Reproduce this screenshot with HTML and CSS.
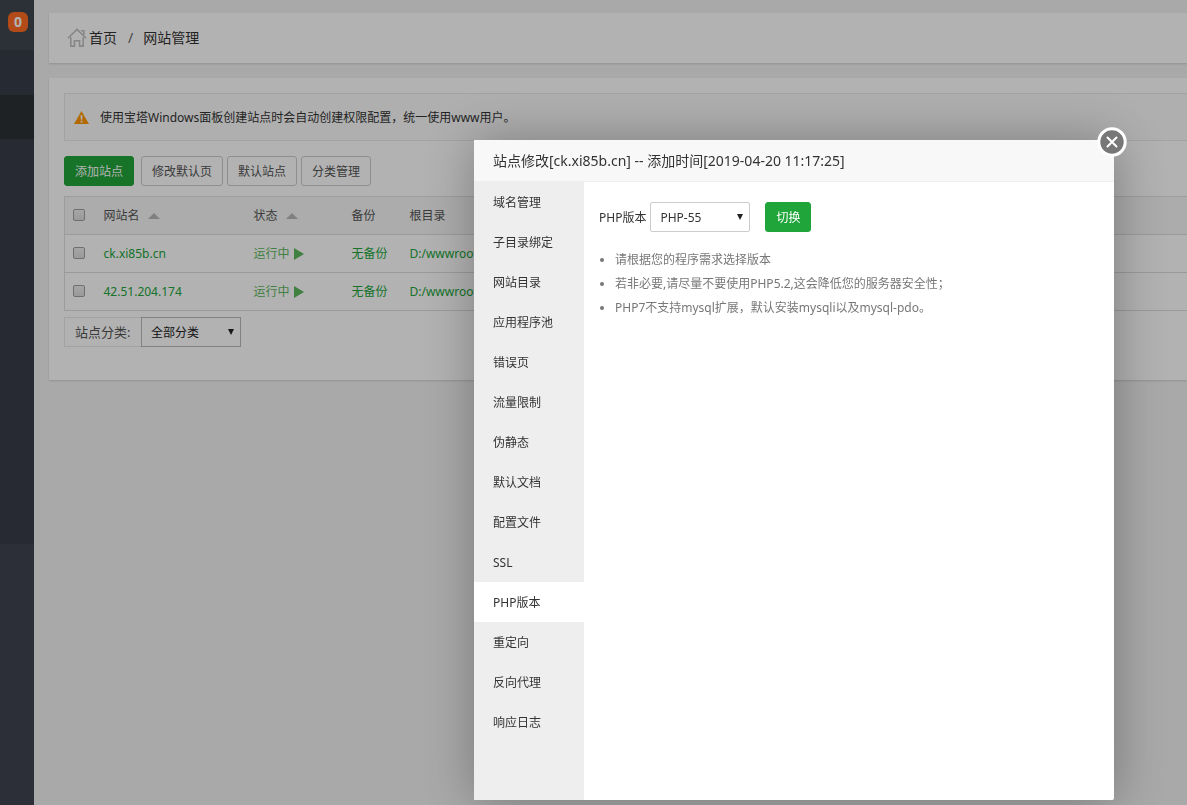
FILE: index.html
```html
<!DOCTYPE html>
<html lang="zh-CN">
<head>
<meta charset="utf-8">
<title>网站管理</title>
<link rel="stylesheet" href="styles.css">
</head>
<body>
<div class="layout">
  <aside class="sidebar">
    <div class="sidebar-top"><span class="badge">0</span></div>
    <div class="sidebar-item"></div>
    <div class="sidebar-item active"></div>
    <div class="sidebar-menu"></div>
    <div class="sidebar-rest"></div>
  </aside>
  <main class="main">
    <nav class="card crumbs">
      <svg class="home" viewBox="0 0 18 18" aria-hidden="true"><path d="M.8 9.200 9 1.200l8.200 8M12.600 2.400h2.600v4M3.400 8.400v7.900h3.300v-4.800h4.600v4.800h3.300V8.400" /></svg>
      <a href="#">首页</a><span class="slash">/</span><a href="#">网站管理</a>
    </nav>
    <section class="card content">
      <div class="notice">
        <svg class="warn" viewBox="0 0 14 12" aria-hidden="true"><path fill="#f90" d="M7 0 14 12H0z"/><path fill="#fff" d="M6 4h2l-.4 4H6.400zM6.200 9h1.600v1.600H6.200z"/></svg>
        <span>使用宝塔Windows面板创建站点时会自动创建权限配置，统一使用www用户。</span>
      </div>
      <div class="toolbar">
        <button class="btn primary add">添加站点</button>
        <button class="btn">修改默认页</button>
        <button class="btn">默认站点</button>
        <button class="btn">分类管理</button>
      </div>
      <table class="sites">
        <thead>
          <tr><th class="c-check"><input type="checkbox" aria-label="全选"></th><th class="c-name">网站名<i class="sort"></i></th><th class="c-state">状态<i class="sort"></i></th><th class="c-backup">备份</th><th>根目录</th></tr>
        </thead>
        <tbody>
          <tr><td><input type="checkbox" aria-label="ck.xi85b.cn"></td><td><a href="#">ck.xi85b.cn</a></td><td><a class="running" href="#">运行中<i class="play"></i></a></td><td><a href="#">无备份</a></td><td><a href="#">D:/wwwroot</a></td></tr>
          <tr><td><input type="checkbox" aria-label="42.51.204.174"></td><td><a href="#">42.51.204.174</a></td><td><a class="running" href="#">运行中<i class="play"></i></a></td><td><a href="#">无备份</a></td><td><a href="#">D:/wwwroot</a></td></tr>
        </tbody>
      </table>
      <div class="filter">
        <label for="category">站点分类:</label>
        <span class="select-wrap"><select id="category"><option>全部分类</option></select></span>
      </div>
    </section>
  </main>
</div>
<div class="shade"></div>
<div class="dialog" role="dialog" aria-labelledby="dialog-title">
  <h1 class="dialog-title" id="dialog-title">站点修改[ck.xi85b.cn] -- 添加时间[2019-04-20 11:17:25]</h1>
  <button class="close" aria-label="关闭"><svg viewBox="0 0 30 30" aria-hidden="true"><circle cx="15" cy="15" r="13.200" fill="#777" stroke="#fff" stroke-width="3"/><path d="m10.500 10.500 9 9m0-9-9 9" stroke="#fff" stroke-width="2" stroke-linecap="round"/></svg></button>
  <div class="dialog-body">
    <nav class="tabs">
      <a href="#">域名管理</a>
      <a href="#">子目录绑定</a>
      <a href="#">网站目录</a>
      <a href="#">应用程序池</a>
      <a href="#">错误页</a>
      <a href="#">流量限制</a>
      <a href="#">伪静态</a>
      <a href="#">默认文档</a>
      <a href="#">配置文件</a>
      <a href="#">SSL</a>
      <a href="#" class="on">PHP版本</a>
      <a href="#">重定向</a>
      <a href="#">反向代理</a>
      <a href="#">响应日志</a>
    </nav>
    <div class="pane">
      <div class="version">
        <label for="php">PHP版本</label>
        <span class="select-wrap"><select id="php" class="rounded"><option>PHP-55</option></select></span>
        <button class="btn primary switch">切换</button>
      </div>
      <ul class="tips">
        <li>请根据您的程序需求选择版本</li>
        <li>若非必要,请尽量不要使用PHP5.2,这会降低您的服务器安全性；</li>
        <li>PHP7不支持mysql扩展，默认安装mysqli以及mysql-pdo。</li>
      </ul>
    </div>
  </div>
</div>
</body>
</html>
```
FILE: styles.css
```css
* { box-sizing: border-box; }
html, body { height: 100%; }
body {
  margin: 0;
  overflow: hidden;
  background: #f3f3f3;
  color: #333;
  font: 12px/18px "Noto Sans", "Noto Sans CJK SC", sans-serif;
}
a { color: inherit; text-decoration: none; }
button, select { font: inherit; }

.layout { display: flex; min-height: 100%; }
.sidebar {
  flex: 0 0 34px;
  display: flex;
  flex-direction: column;
  background: #3f444f;
}
.sidebar-top { height: 50px; padding: 12px 6px 0 8px; background: #40464f; }
.badge {
  display: block;
  height: 20px;
  border-radius: 6px;
  background: #ff6c23;
  color: #fff;
  font-size: 14px;
  font-weight: 700;
  line-height: 20px;
  text-align: center;
}
.sidebar-item { height: 45px; background: #373d49; }
.sidebar-item.active { height: 44px; background: #2c3136; }
.sidebar-menu { height: 405px; background: #383d48; }
.sidebar-rest { flex: 1; }

.main { flex: 1; min-width: 0; padding: 13px 0 0 15px; }
.card { background: #fff; box-shadow: 0 1px 2px rgba(0, 0, 0, .15); }
.crumbs {
  display: flex;
  align-items: center;
  height: 50px;
  margin-bottom: 15px;
  padding-left: 18px;
  font-size: 14px;
}
.home { width: 20px; height: 20px; margin-right: 2px; fill: none; stroke: #c0c0c0; stroke-width: 1.400; }
.slash { margin: 0 10px 0 11px; color: #666; }
.content { padding: 15px 0 33px 15px; }
.notice {
  display: flex;
  align-items: center;
  height: 48px;
  padding-left: 9px;
  border: 1px solid #e8e8e8;
  border-right: 0;
  background: #fbfbfb;
}
.notice span { padding-top: 2px; }
.warn { width: 15px; height: 13px; margin-right: 11px; }

.toolbar { display: flex; gap: 4px; margin: 15px 0 10px; }
.btn {
  height: 30px;
  padding: 2px 10px 0;
  border: 1px solid #ccc;
  border-radius: 3px;
  background: #fff;
  color: #555;
}
.btn.primary { border-color: #20a53a; background: #20a53a; color: #fff; }
.btn.add { margin-right: 3px; }

.sites {
  width: 100%;
  table-layout: fixed;
  border-collapse: collapse;
  border: 1px solid #e0e0e0;
  border-right: 0;
  color: #555;
}
.sites tr { height: 38px; border-bottom: 1px solid #ddd; }
.sites thead { background: #f6f6f6; }
.sites th, .sites td { padding: 0; font-weight: 400; text-align: left; }
.sites td a { color: #20a53a; }
.sites td a.running { color: #5cb85c; }
.c-check { width: 39px; }
.c-name { width: 150px; }
.c-state { width: 98px; }
.c-backup { width: 58px; }
.sites input {
  appearance: none;
  display: block;
  width: 12px;
  height: 12px;
  margin: 0 0 1px 8px;
  border: 1px solid #a0a0a0;
  border-radius: 2px;
  background: linear-gradient(#eee, #dcdcdc);
}
.sort {
  display: inline-block;
  margin-left: 8px;
  border: 6px solid transparent;
  border-top: 0;
  border-bottom-color: #b8b8b8;
  vertical-align: 1px;
}
.play {
  display: inline-block;
  margin-left: 4px;
  border: 6px solid transparent;
  border-right: 0;
  border-left: 10px solid #5cb85c;
  vertical-align: -2px;
}
.filter { display: flex; margin-top: 6px; }
.filter label {
  height: 30px;
  width: 77px;
  padding-left: 10px;
  border: 1px solid #e8e8e8;
  border-right: 0;
  color: #555;
  font-size: 13px;
  line-height: 28px;
}
.select-wrap { position: relative; display: block; width: 100px; height: 30px; }
.select-wrap::after {
  content: "";
  position: absolute;
  top: 12px;
  right: 7px;
  border: 3px solid transparent;
  border-top: 6px solid #222;
  border-bottom: 0;
  pointer-events: none;
}
select {
  appearance: none;
  width: 100%;
  height: 100%;
  padding: 2px 9px 0;
  border: 1px solid #bbb;
  border-radius: 0;
  background: #fff;
  color: #222;
}
select.rounded { border-color: #ccc; border-radius: 2px; color: #333; }

.shade { position: fixed; inset: 0; background: rgba(0, 0, 0, .3); }
.dialog {
  position: absolute;
  left: 474px;
  top: 140px;
  display: flex;
  flex-direction: column;
  width: 640px;
  height: 660px;
  border-radius: 2px;
  background: #fff;
  box-shadow: 1px 1px 50px rgba(0, 0, 0, .3);
}
.dialog-title {
  height: 42px;
  margin: 0;
  padding: 0 19px;
  border-bottom: 1px solid #eee;
  background: #f8f8f8;
  font-size: 14px;
  font-weight: 400;
  line-height: 41px;
}
.close {
  position: absolute;
  top: -13px;
  right: -13px;
  width: 30px;
  height: 30px;
  padding: 0;
  border: 0;
  background: none;
}
.close svg { display: block; }
.dialog-body { flex: 1; display: flex; }
.tabs { width: 110px; background: #eee; }
.tabs a { display: block; height: 40px; padding-left: 19px; line-height: 42px; }
.tabs .on { background: #fff; }
.pane { flex: 1; padding: 20px 15px; }
.version { display: flex; align-items: center; }
.version label { margin-right: 4px; padding-top: 2px; }
.switch { margin-left: 15px; }
.tips { margin: 16px 0 0; padding-left: 16px; color: #777; line-height: 24px; }
```
